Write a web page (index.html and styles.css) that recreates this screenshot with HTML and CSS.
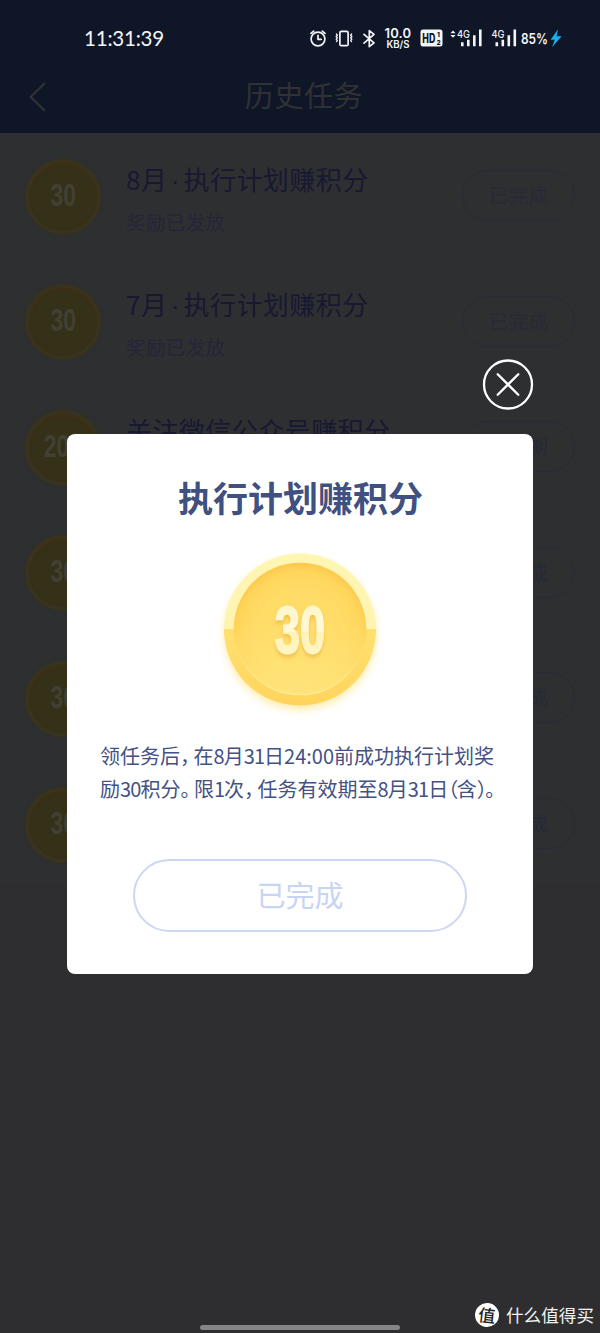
FILE: index.html
```html
<!DOCTYPE html>
<html lang="zh-CN">
<head>
<meta charset="utf-8">
<title>历史任务</title>
<link rel="stylesheet" href="styles.css">
</head>
<body>
<div class="screen">
  <header class="top">
    <div class="status">
      <time class="clock">11:31:39</time>
      <svg class="status-icons" width="260" height="30" viewBox="305 23 260 30">
        <g fill="none" stroke="#f4f5f7" stroke-width="1.7" stroke-linecap="round" stroke-linejoin="round">
          <circle cx="318" cy="39" r="6.9"/>
          <path d="M318 35.3v4h3.2M311 33.4l2.7-2.3M325 33.4l-2.7-2.3"/>
          <rect x="339.9" y="31.3" width="8.2" height="14.4" rx="1.5"/>
          <path stroke-width="1.3" d="M336.4 34l1 1.2-1.3 1.3 1.3 1.3-1.3 1.3 1.3 1.3-1 1.2M351.6 34l-1 1.2 1.3 1.3-1.3 1.3 1.3 1.3-1.3 1.3 1 1.2"/>
          <path d="M364 34.3l10 8.6-4.7 3.7V30.7l4.7 3.7-10 8.7"/>
        </g>
        <g class="status-text">
          <text x="384.5" y="38.3" font-size="13" textLength="26.5">10.0</text>
          <text x="386.5" y="48" font-size="9.8" textLength="23" lengthAdjust="spacingAndGlyphs">KB/S</text>
          <text x="521" y="43.7" font-size="14.5" textLength="27" lengthAdjust="spacingAndGlyphs">85%</text>
          <text class="net" x="457" y="38" font-size="10.5" textLength="13" lengthAdjust="spacingAndGlyphs">4G</text>
          <text class="net" x="491.5" y="38" font-size="10.5" textLength="13" lengthAdjust="spacingAndGlyphs">4G</text>
        </g>
        <rect x="420.5" y="29.5" width="22" height="17" rx="2.5" fill="#f4f5f7"/>
        <g class="badge-text">
          <text x="422.3" y="42.6" font-size="12.5" textLength="13" lengthAdjust="spacingAndGlyphs">HD</text>
          <text x="437" y="36.8" font-size="6.5">1</text>
          <text x="436.6" y="44.8" font-size="6.5">2</text>
        </g>
        <path fill="#f4f5f7" d="M450.4 33.2l2.6-2.8 2.6 2.8zM450.4 34.9l2.6 2.8 2.6-2.8zM461 42.3h2.6v4H461zM467 39.8h2.6v6.5H467zM473 35.3h2.6v11H473zM479 29.5h2.6v16.8H479zM495.5 42.3h2.6v4h-2.6zM501.5 39.8h2.6v6.5h-2.6zM507.5 35.3h2.6v11h-2.6zM513.5 29.5h2.6v16.8h-2.6z"/>
        <path fill="#1aafef" d="M558 29.2l-7.4 10.5h4.2L552 47.2l9.6-11h-5z"/>
      </svg>
    </div>
    <nav class="nav">
      <svg class="back" width="20" height="32" viewBox="0 0 20 32"><path d="M17 2L2.7 16 17 30"/></svg>
      <h1>历史任务</h1>
    </nav>
  </header>
  <main class="list">
    <section class="row"><div class="coin"><b>30</b></div><div class="info"><h2>8月<span class="dot">·</span>执行计划赚积分</h2><p>奖励已发放</p></div><span class="pill">已完成</span></section>
    <section class="row"><div class="coin"><b>30</b></div><div class="info"><h2>7月<span class="dot">·</span>执行计划赚积分</h2><p>奖励已发放</p></div><span class="pill">已完成</span></section>
    <section class="row"><div class="coin"><b>200</b></div><div class="info"><h2>关注微信公众号赚积分</h2></div><span class="pill">已过期</span></section>
    <section class="row"><div class="coin"><b>30</b></div><div class="info"></div><span class="pill">已完成</span></section>
    <section class="row"><div class="coin"><b>30</b></div><div class="info"></div><span class="pill">已完成</span></section>
    <section class="row"><div class="coin"><b>30</b></div><div class="info"></div><span class="pill">已完成</span></section>
  </main>
  <div class="overlay">
    <svg class="close" width="52" height="52" viewBox="0 0 52 52"><circle cx="26" cy="25.5" r="24"/><path d="M15.7 15.2l20.6 20.6M36.3 15.2L15.7 35.8"/></svg>
    <div class="dialog">
      <h2 class="dialog-title">执行计划赚积分</h2>
      <svg class="medal" width="184" height="184" viewBox="0 0 184 184">
        <defs>
          <linearGradient id="rim" x1="0" y1="0" x2="0" y2="1">
            <stop offset="0" stop-color="#fff6b4"/><stop offset=".5" stop-color="#fff3b0"/>
            <stop offset=".5" stop-color="#ffe170"/><stop offset="1" stop-color="#ffd45c"/>
          </linearGradient>
          <radialGradient id="face" cx=".5" cy=".54" r=".55">
            <stop offset="0" stop-color="#ffdd6c"/><stop offset=".6" stop-color="#ffdc66"/>
            <stop offset=".85" stop-color="#ffd65c"/><stop offset="1" stop-color="#fdc64c"/>
          </radialGradient>
          <linearGradient id="shine" x1="0" y1="0" x2="0" y2="1">
            <stop offset=".45" stop-color="#ffe580" stop-opacity="0"/><stop offset="1" stop-color="#ffe580" stop-opacity=".85"/>
          </linearGradient>
          <linearGradient id="edge" x1="0" y1="0" x2="0" y2="1">
            <stop offset=".55" stop-color="#ffe789" stop-opacity="0"/><stop offset="1" stop-color="#ffeb97"/>
          </linearGradient>
          <linearGradient id="digits" x1="0" y1="0" x2="0" y2="1">
            <stop offset="0" stop-color="#fff5c4"/><stop offset=".52" stop-color="#fff9d8"/>
            <stop offset=".52" stop-color="#fff3ba"/><stop offset="1" stop-color="#fff6cc"/>
          </linearGradient>
          <filter id="glow" x="-20%" y="-20%" width="140%" height="140%"><feGaussianBlur stdDeviation="5"/></filter>
        </defs>
        <circle cx="92" cy="96" r="75" fill="#ffdf70" opacity=".65" filter="url(#glow)"/>
        <circle cx="92" cy="91.5" r="76" fill="url(#rim)"/>
        <circle cx="92" cy="91" r="66.3" fill="url(#face)"/>
        <circle cx="92" cy="91" r="66" fill="url(#shine)"/>
        <circle cx="92" cy="91" r="65.7" fill="none" stroke="url(#edge)" stroke-width="1.3"/>
        <text class="medal-number" transform="translate(92 115) scale(.69 1)" text-anchor="middle" fill="url(#digits)" stroke="url(#digits)">30</text>
      </svg>
      <p class="desc"><span class="line">领任务后<span class="stop">，</span>在<span class="num">8</span>月<span class="num">31</span>日24:00前成功执行计划奖</span><span class="line">励<span class="num">30</span>积分<span class="stop">。</span>限<span class="num">1</span>次<span class="stop">，</span>任务有效期至<span class="num">8</span>月<span class="num">31</span>日<span class="paren">（</span>含<span class="paren">）</span>。</span></p>
      <button class="done">已完成</button>
    </div>
  </div>
  <div class="home-bar"></div>
  <div class="watermark"><span class="mark">值</span><span>什么值得买</span></div>
</div>
</body>
</html>
```
FILE: styles.css
```css
* { box-sizing: border-box; margin: 0; padding: 0; }
body { background: #2e2e30; font-family: "Noto Sans CJK SC", sans-serif; }
.screen { position: relative; width: 600px; height: 1333px; overflow: hidden; background: #2e2e30; }
.top { height: 133px; background: #0f1628; }
.status { height: 60px; padding: 23px 35px 0 84px; display: flex; justify-content: space-between; }
.clock { color: #f4f5f7; font: 20.5px/30px Lato, sans-serif; letter-spacing: -.2px; white-space: nowrap; }
.status-text { font-family: Inter, sans-serif; font-weight: 600; fill: #f4f5f7; }
.net { font-weight: 500; }
.badge-text { font-family: Inter, sans-serif; font-weight: 800; fill: #0f1628; }
.nav { display: grid; grid-template-columns: 40px 1fr 32px; align-items: center; height: 73px; padding: 0 28px; }
.back { fill: none; stroke: #303133; stroke-width: 2.4; }
.nav h1 { color: #303133; font-size: 29px; font-weight: 400; line-height: 40px; letter-spacing: .6px; text-align: center; padding-bottom: 5px; }
.list { height: 751px; background: #2e2f31; }
.row { display: flex; height: 125.5px; padding: 1px 25px 0; align-items: center; border-bottom: 1px solid #2c2d2f; }
.row:last-child { border-bottom: 0; }
.coin { display: flex; align-items: center; justify-content: center; flex: none; width: 76px; height: 76px; margin-top: 2px; border-radius: 50%; border: 4px solid #38331f; background: radial-gradient(circle at 50% 56%, #353018 60%, #3c3016 100%); box-shadow: inset 0 1px 2px #432f13, 0 0 3px #353020; color: #424035; }
.coin b { font: 700 31px/32px "Liberation Sans", sans-serif; transform: scaleX(.74) translateY(-1px); }
.info { flex: 1; height: 88px; padding-left: 25px; }
.info h2 { color: #171831; font-size: 26px; font-weight: 400; line-height: 38px; letter-spacing: .45px; white-space: nowrap; margin-top: 8px; }
.dot { padding: 0 4px 0 3.5px; font-family: "Liberation Sans", sans-serif; letter-spacing: 0; line-height: 1; }
.info p { color: #24253a; font-size: 19.5px; line-height: 30px; letter-spacing: .4px; margin-top: 9px; }
.pill { width: 113px; height: 51px; border: 1.5px solid #282b37; border-radius: 26px; color: #272a36; font-size: 19.5px; line-height: 47px; letter-spacing: .3px; text-align: center; }
.overlay { position: absolute; inset: 359px 67px auto; display: flex; flex-direction: column; align-items: flex-end; }
.close { display: block; margin-right: -1px; fill: none; stroke: #fff; stroke-width: 2.3; stroke-linecap: round; }
.dialog { display: flex; flex-direction: column; align-items: center; width: 466px; height: 540px; margin-top: 23px; padding-top: 39px; background: #fff; border-radius: 8px; }
.dialog-title { color: #405080; font-size: 35px; font-weight: 700; line-height: 48px; padding: 0 0 2px 1px; }
.medal { display: block; margin-top: 15px; flex: none; }
.medal-number { font: 700 66px "Liberation Sans", sans-serif; stroke-width: 2; filter: drop-shadow(0 3px 2px #e8b441aa); }
.desc { align-self: flex-start; width: 400px; margin: 17px 0 0 33px; color: #435184; font-size: 20px; line-height: 33px; font-feature-settings: "halt"; }
.line { display: block; white-space: nowrap; }
.num { letter-spacing: -.9px; }
.stop { letter-spacing: 3.5px; }
.paren { letter-spacing: -1.5px; }
.done { width: 334px; height: 73px; margin-top: 54px; padding-bottom: 4px; border: 2px solid #cbd7f3; border-radius: 37px; background: #fff; color: #c8d4f3; font: 400 29px/64px "Noto Sans CJK SC", sans-serif; }
.home-bar { position: absolute; left: 200px; bottom: 3px; width: 200px; height: 5px; border-radius: 3px; background: #858587; }
.watermark { position: absolute; right: 6px; bottom: 4px; display: flex; align-items: center; gap: 7px; color: #f3f3f3; font-size: 17.6px; line-height: 28px; white-space: nowrap; }
.mark { width: 24px; height: 24px; border-radius: 50%; background: #fff; color: #222; font-size: 17px; font-weight: 500; line-height: 23px; text-align: center; transform: rotate(6deg); }
```
